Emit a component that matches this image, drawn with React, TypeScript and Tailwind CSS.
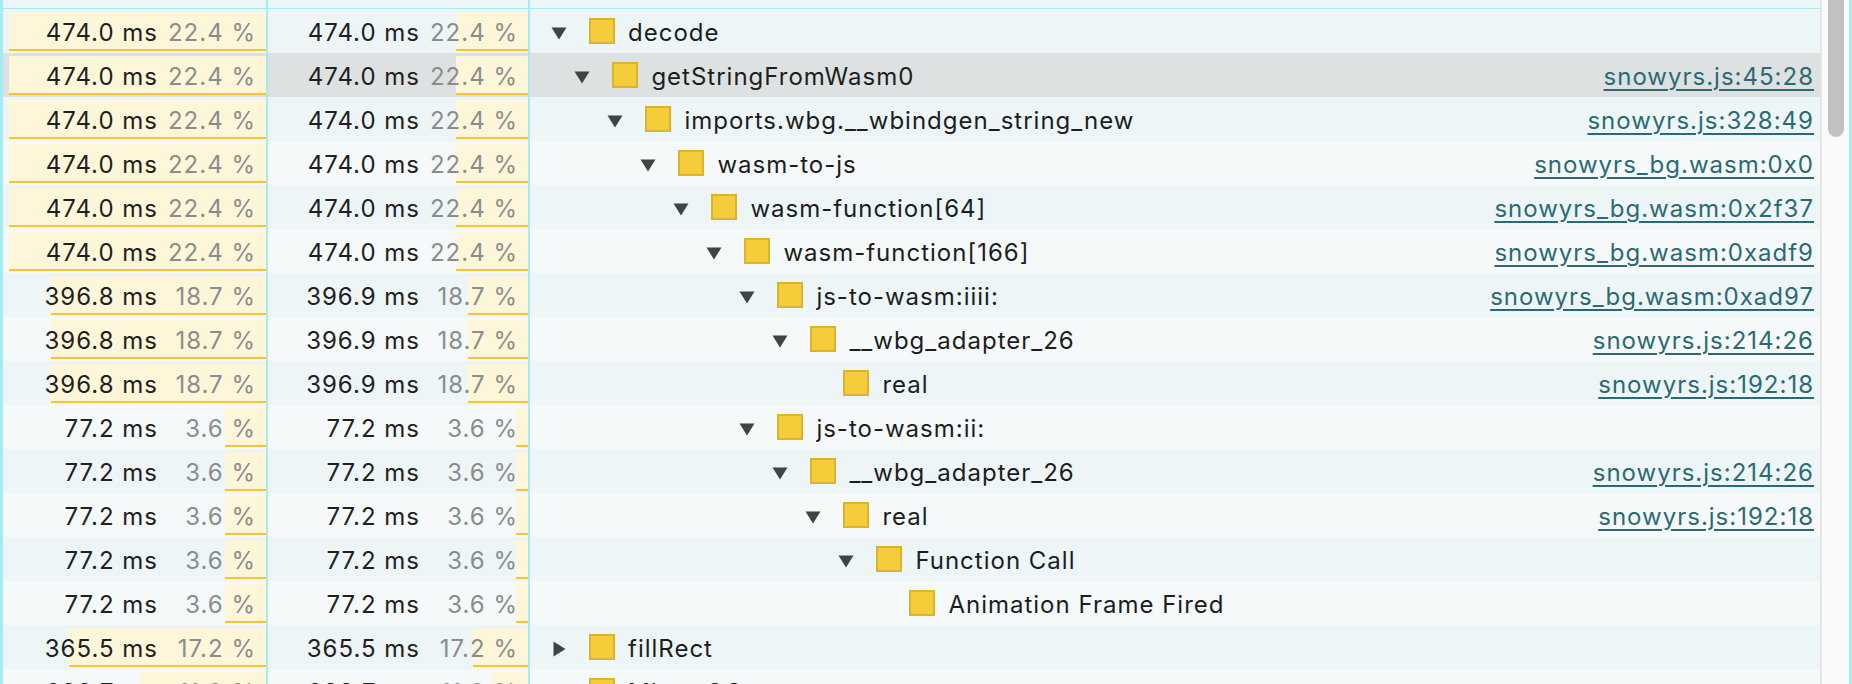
import React from "react";

type Row = {
  t1: string;
  p1: number;
  t2: string;
  p2: number;
  name: string;
  level: number;
  tog: "down" | "right" | "none";
  link: string;
};

const rows: Row[] = [
  { t1: "474.0 ms", p1: 22.4, t2: "474.0 ms", p2: 22.4, name: "decode", level: 0, tog: "down", link: "" },
  { t1: "474.0 ms", p1: 22.4, t2: "474.0 ms", p2: 22.4, name: "getStringFromWasm0", level: 1, tog: "down", link: "snowyrs.js:45:28" },
  { t1: "474.0 ms", p1: 22.4, t2: "474.0 ms", p2: 22.4, name: "imports.wbg.__wbindgen_string_new", level: 2, tog: "down", link: "snowyrs.js:328:49" },
  { t1: "474.0 ms", p1: 22.4, t2: "474.0 ms", p2: 22.4, name: "wasm-to-js", level: 3, tog: "down", link: "snowyrs_bg.wasm:0x0" },
  { t1: "474.0 ms", p1: 22.4, t2: "474.0 ms", p2: 22.4, name: "wasm-function[64]", level: 4, tog: "down", link: "snowyrs_bg.wasm:0x2f37" },
  { t1: "474.0 ms", p1: 22.4, t2: "474.0 ms", p2: 22.4, name: "wasm-function[166]", level: 5, tog: "down", link: "snowyrs_bg.wasm:0xadf9" },
  { t1: "396.8 ms", p1: 18.7, t2: "396.9 ms", p2: 18.7, name: "js-to-wasm:iiii:", level: 6, tog: "down", link: "snowyrs_bg.wasm:0xad97" },
  { t1: "396.8 ms", p1: 18.7, t2: "396.9 ms", p2: 18.7, name: "__wbg_adapter_26", level: 7, tog: "down", link: "snowyrs.js:214:26" },
  { t1: "396.8 ms", p1: 18.7, t2: "396.9 ms", p2: 18.7, name: "real", level: 8, tog: "none", link: "snowyrs.js:192:18" },
  { t1: "77.2 ms", p1: 3.6, t2: "77.2 ms", p2: 3.6, name: "js-to-wasm:ii:", level: 6, tog: "down", link: "" },
  { t1: "77.2 ms", p1: 3.6, t2: "77.2 ms", p2: 3.6, name: "__wbg_adapter_26", level: 7, tog: "down", link: "snowyrs.js:214:26" },
  { t1: "77.2 ms", p1: 3.6, t2: "77.2 ms", p2: 3.6, name: "real", level: 8, tog: "down", link: "snowyrs.js:192:18" },
  { t1: "77.2 ms", p1: 3.6, t2: "77.2 ms", p2: 3.6, name: "Function Call", level: 9, tog: "down", link: "" },
  { t1: "77.2 ms", p1: 3.6, t2: "77.2 ms", p2: 3.6, name: "Animation Frame Fired", level: 10, tog: "none", link: "" },
  { t1: "365.5 ms", p1: 17.2, t2: "365.5 ms", p2: 17.2, name: "fillRect", level: 0, tog: "right", link: "" },
  { t1: "233.7 ms", p1: 11.0, t2: "233.7 ms", p2: 11.0, name: "Minor GC", level: 0, tog: "right", link: "" },
];

function Toggle({ kind }: { kind: Row["tog"] }) {
  if (kind === "down") {
    return (
      <svg width="16" height="13" viewBox="0 0 16 13" className="mt-[5px]">
        <polygon points="0.5,0.5 15.5,0.5 8,12.5" fill="#3f4545" />
      </svg>
    );
  }
  if (kind === "right") {
    return (
      <svg width="13" height="16" viewBox="0 0 13 16" className="mt-[3px]">
        <polygon points="0.5,0.5 12.5,8 0.5,15.5" fill="#3f4545" />
      </svg>
    );
  }
  return null;
}

function TimeCell({ t, p, barW, w }: { t: string; p: number; barW: number; w: string }) {
  return (
    <div className={`relative h-full ${w} shrink-0 border-r-2 border-[#a4ebf7]`}>
      <div
        className="absolute right-0 top-[3px] h-[39px] bg-[#fef6d8] border-b-2 border-[#f4c531]"
        style={{ width: `${barW}px` }}
      />
      <div className="relative flex h-full items-center justify-end pr-[10px] pt-[3px]">
        <span className="text-[#1f2121]">{t}</span>
        <span className="w-[98px] text-right text-[#8b8d8d]">{p.toFixed(1)} %</span>
      </div>
    </div>
  );
}

export default function App() {
  return (
    <div className="w-[1852px] h-[684px] overflow-hidden bg-[#f5f9fa] font-['Inter',sans-serif] text-[24px] tracking-[1px] leading-none">
      <div className="flex h-full border-l-[3px] border-r-[3px] border-[#a4ebf7]">
        <div className="flex flex-1 flex-col min-w-0">
          <div className="flex h-[9px] shrink-0 border-b border-[#a4ebf7] bg-[#eef5f7]">
            <div className="w-[265px] shrink-0 border-r-2 border-[#a4ebf7]" />
            <div className="w-[262px] shrink-0 border-r-2 border-[#a4ebf7]" />
            <div className="flex-1" />
          </div>
          {rows.map((r, i) => {
            const selected = i === 1;
            const bg = selected ? "bg-[#dde1e2]" : i % 2 === 0 ? "bg-[#edf5f7]" : "bg-[#f5f9fa]";
            const pad = r.level === 0 ? 21 : 44.4 + (r.level - 1) * 33;
            return (
              <div key={i} className={`flex h-[44px] shrink-0 ${bg}`}>
                <TimeCell t={r.t1} p={r.p1} barW={(r.p1 / 22.4) * 257} w="w-[265px]" />
                <TimeCell t={r.t2} p={r.p2} barW={(r.p2 / 22.4) * 72} w="w-[262px]" />
                <div className="flex flex-1 min-w-0 items-center h-full" style={{ paddingLeft: `${pad}px` }}>
                  <div className="flex w-[16px] shrink-0 justify-center">
                    <Toggle kind={r.tog} />
                  </div>
                  <div className="ml-[22px] h-[26px] w-[26px] shrink-0 border-2 border-[#dbb42c] bg-[#f5cd3b]" />
                  <span className="ml-[13px] pt-[3px] text-[#1c1e1e] whitespace-nowrap">{r.name}</span>
                  <div className="flex-1" />
                  {r.link && (
                    <span className="pr-[6px] pt-[3px] text-[#2b6a73] underline decoration-2 underline-offset-[4px] whitespace-nowrap">
                      {r.link}
                    </span>
                  )}
                </div>
              </div>
            );
          })}
        </div>
        <div className="w-[29px] shrink-0 border-l-2 border-[#e6e6e6] bg-[#fafafa] px-[6px]">
          <div className="h-[137px] w-[16px] rounded-b-[8px] bg-[#c1c1c1]" />
        </div>
      </div>
    </div>
  );
}
